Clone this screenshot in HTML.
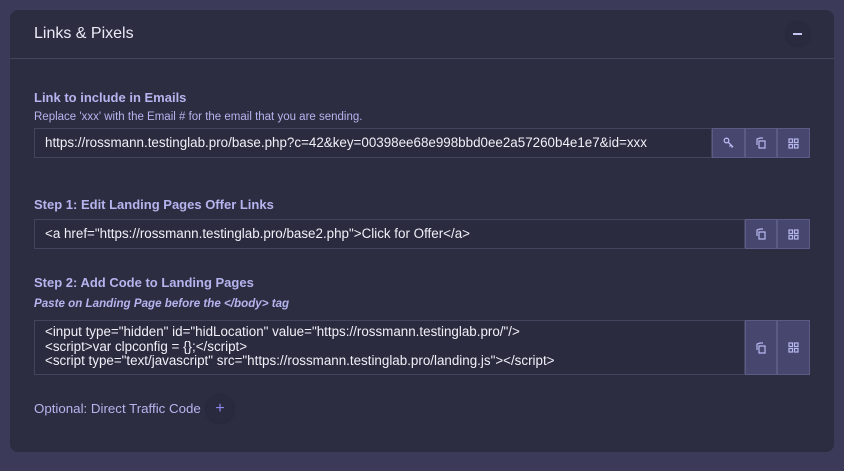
<!DOCTYPE html>
<html><head><style>
body{margin:0;width:844px;height:471px;background:#3b3a58;font-family:"Liberation Sans",sans-serif;overflow:hidden;position:relative}
.card{position:absolute;left:10px;top:10px;width:824px;height:442px;background:#2d2d42;border-radius:8px}
.hdr{position:absolute;left:0;top:0;width:100%;height:48px;border-bottom:1px solid #46455f}
.title{position:absolute;left:24px;top:15px;font-size:16px;color:#eceaf6}
.circ{position:absolute;width:24px;height:24px;border-radius:50%;background:#2a2a3e;box-shadow:0 0 2px #222233}
.h{position:absolute;left:24px;font-size:13px;font-weight:bold;color:#b6b4ee}
.sub{position:absolute;left:24px;font-size:11.5px;color:#b6b4ee}
.inp{position:absolute;left:24px;height:28px;border:1px solid #45445e;background:#2b2b3f;color:#f0f0f8;font-size:13.4px;box-sizing:border-box;padding:6px 10px;white-space:nowrap}
.btn{position:absolute;width:32px;height:30px;background:#47466e;border:1px solid #5c5b85;box-sizing:border-box;display:flex;align-items:center;justify-content:center}
</style></head><body>
<div class="card">
<div class="hdr"><div class="title">Links &amp; Pixels</div>
<div class="circ" style="left:776px;top:12px"><div style="position:absolute;left:7px;top:11px;width:9px;height:1.5px;background:#c6c6f2"></div></div></div>
<div class="h" style="top:80px">Link to include in Emails</div>
<div class="sub" style="top:101px">Replace 'xxx' with the Email # for the email that you are sending.</div>
<div class="inp" style="top:118px;width:678px;height:30px;padding-top:6px">https://rossmann.testinglab.pro/base.php?c=42&amp;key=00398ee68e998bbd0ee2a57260b4e1e7&amp;id=xxx</div>
<div class="btn" style="left:702px;top:118px;width:33px"><svg width="12" height="12" viewBox="0 0 12 12" fill="none" stroke="#b8b8f0" stroke-width="1.3"><circle cx="3.5" cy="3.5" r="2.3"/><path d="M5 5l5 5M8 8l-1.5 1.5M9.5 9.5l-1 1"/></svg></div>
<div class="btn" style="left:735px;top:118px"><svg width="12" height="12" viewBox="0 0 12 12" fill="none" stroke="#b8b8f0" stroke-width="1.2"><path d="M4 4h6v7H4z"/><path d="M2 8V2l3-1h3"/></svg></div>
<div class="btn" style="left:767px;top:118px;width:33px"><svg width="11" height="11" viewBox="0 0 11 11" fill="none" stroke="#b8b8f0" stroke-width="1.2"><rect x="1" y="1" width="3.5" height="3.5"/><rect x="6.5" y="1" width="3.5" height="3.5"/><rect x="1" y="6.5" width="3.5" height="3.5"/><rect x="6.5" y="6.5" width="3.5" height="3.5"/></svg></div>
<div class="h" style="top:187px">Step 1: Edit Landing Pages Offer Links</div>
<div class="inp" style="top:209px;width:711px;height:30px;padding-top:6px">&lt;a href="https://rossmann.testinglab.pro/base2.php"&gt;Click for Offer&lt;/a&gt;</div>
<div class="btn" style="left:735px;top:209px"><svg width="12" height="12" viewBox="0 0 12 12" fill="none" stroke="#b8b8f0" stroke-width="1.2"><path d="M4 4h6v7H4z"/><path d="M2 8V2l3-1h3"/></svg></div>
<div class="btn" style="left:767px;top:209px;width:33px"><svg width="11" height="11" viewBox="0 0 11 11" fill="none" stroke="#b8b8f0" stroke-width="1.2"><rect x="1" y="1" width="3.5" height="3.5"/><rect x="6.5" y="1" width="3.5" height="3.5"/><rect x="1" y="6.5" width="3.5" height="3.5"/><rect x="6.5" y="6.5" width="3.5" height="3.5"/></svg></div>
<div class="h" style="top:265px">Step 2: Add Code to Landing Pages</div>
<div class="sub" style="top:287px;font-style:italic;font-weight:bold;font-size:11.6px">Paste on Landing Page before the &lt;/body&gt; tag</div>
<div class="inp" style="top:310px;width:711px;height:55px;padding:4px 10px;line-height:14.5px">&lt;input type="hidden" id="hidLocation" value="https://rossmann.testinglab.pro/"/&gt;<br>&lt;script&gt;var clpconfig = {};&lt;/script&gt;<br>&lt;script type="text/javascript" src="https://rossmann.testinglab.pro/landing.js"&gt;&lt;/script&gt;</div>
<div class="btn" style="left:735px;top:310px;height:55px"><svg width="12" height="12" viewBox="0 0 12 12" fill="none" stroke="#b8b8f0" stroke-width="1.2"><path d="M4 4h6v7H4z"/><path d="M2 8V2l3-1h3"/></svg></div>
<div class="btn" style="left:767px;top:310px;width:33px;height:55px"><svg width="11" height="11" viewBox="0 0 11 11" fill="none" stroke="#b8b8f0" stroke-width="1.2"><rect x="1" y="1" width="3.5" height="3.5"/><rect x="6.5" y="1" width="3.5" height="3.5"/><rect x="1" y="6.5" width="3.5" height="3.5"/><rect x="6.5" y="6.5" width="3.5" height="3.5"/></svg></div>
<div style="position:absolute;left:24px;top:391px;font-size:13.3px;color:#b6b4ee">Optional: Direct Traffic Code</div>
<div class="circ" style="left:196px;top:385px;width:28px;height:28px;color:#8b88f0;font-size:16px;text-align:center;line-height:27px">+</div>
</div>
</body></html>
